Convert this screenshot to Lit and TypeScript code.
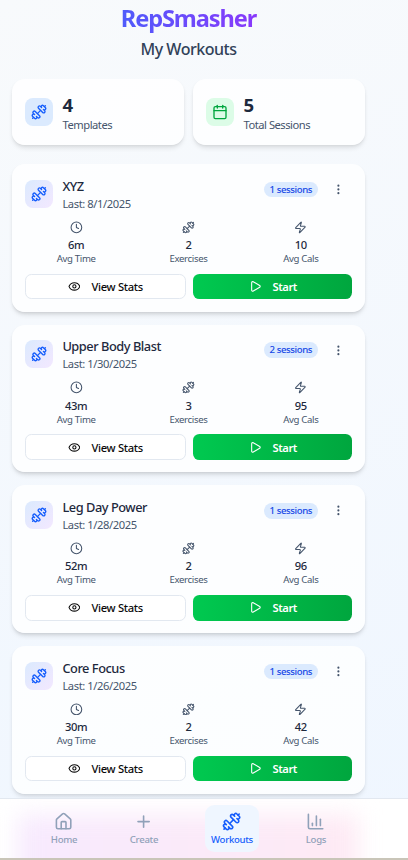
import { LitElement, html, css, svg } from "lit";
import { customElement, property } from "lit/decorators.js";

const ICONS: Record<string, any> = {
  dumbbell: svg`<path d="M17.596 12.768a2 2 0 1 0 2.829-2.829l-1.768-1.767a2 2 0 0 0 2.828-2.829l-2.828-2.828a2 2 0 0 0-2.829 2.828l-1.767-1.768a2 2 0 1 0-2.829 2.829z"/><path d="m2.5 21.5 1.4-1.4"/><path d="m20.1 3.9 1.4-1.4"/><path d="M5.343 21.485a2 2 0 1 0 2.829-2.828l1.767 1.768a2 2 0 1 0 2.829-2.829l-6.364-6.364a2 2 0 1 0-2.829 2.829l1.768 1.767a2 2 0 0 0-2.828 2.829z"/><path d="m9.6 14.4 4.8-4.8"/>`,
  calendar: svg`<path d="M8 2v4"/><path d="M16 2v4"/><rect width="18" height="18" x="3" y="4" rx="2"/><path d="M3 10h18"/>`,
  clock: svg`<circle cx="12" cy="12" r="10"/><path d="M12 6v6l4 2"/>`,
  zap: svg`<path d="M4 14a1 1 0 0 1-.78-1.63l9.9-10.2a.5.5 0 0 1 .86.46l-1.92 6.02A1 1 0 0 0 13 10h7a1 1 0 0 1 .78 1.63l-9.9 10.2a.5.5 0 0 1-.86-.46l1.92-6.02A1 1 0 0 0 11 14z"/>`,
  more: svg`<circle cx="12" cy="12" r="1"/><circle cx="12" cy="5" r="1"/><circle cx="12" cy="19" r="1"/>`,
  eye: svg`<path d="M2.062 12.348a1 1 0 0 1 0-.696 10.75 10.75 0 0 1 19.876 0 1 1 0 0 1 0 .696 10.75 10.75 0 0 1-19.876 0"/><circle cx="12" cy="12" r="3"/>`,
  play: svg`<path d="M5 5a2 2 0 0 1 3.008-1.728l11.997 6.998a2 2 0 0 1 .003 3.458l-12 7A2 2 0 0 1 5 19z"/>`,
  home: svg`<path d="M15 21v-8a1 1 0 0 0-1-1h-4a1 1 0 0 0-1 1v8"/><path d="M3 10a2 2 0 0 1 .709-1.528l7-5.999a2 2 0 0 1 2.582 0l7 5.999A2 2 0 0 1 21 10v9a2 2 0 0 1-2 2H5a2 2 0 0 1-2-2z"/>`,
  plus: svg`<path d="M5 12h14"/><path d="M12 5v14"/>`,
  chart: svg`<path d="M3 3v16a2 2 0 0 0 2 2h16"/><path d="M18 17V9"/><path d="M13 17V5"/><path d="M8 17v-3"/>`,
};

const icon = (name: string, size: number, weight = 2) => html`<svg
  width=${size} height=${size} viewBox="0 0 24 24" fill="none" stroke="currentColor"
  stroke-width=${weight} stroke-linecap="round" stroke-linejoin="round">${ICONS[name]}</svg>`;

interface Workout { name: string; last: string; sessions: number; time: string; exercises: number; cals: number }

const WORKOUTS: Workout[] = [
  { name: "XYZ", last: "8/1/2025", sessions: 1, time: "6m", exercises: 2, cals: 10 },
  { name: "Upper Body Blast", last: "1/30/2025", sessions: 2, time: "43m", exercises: 3, cals: 95 },
  { name: "Leg Day Power", last: "1/28/2025", sessions: 1, time: "52m", exercises: 2, cals: 96 },
  { name: "Core Focus", last: "1/26/2025", sessions: 1, time: "30m", exercises: 2, cals: 42 },
];

@customElement("workout-card")
class WorkoutCard extends LitElement {
  @property({ attribute: false }) workout!: Workout;

  static styles = css`
    :host { display: block; box-sizing: border-box; height: 147.8px; padding: 12.8px; border-radius: 12.8px;
      background: rgba(255, 255, 255, .8); box-shadow: 0 3.2px 5px -1px rgba(0,0,0,.1), 0 1.6px 3.2px -1.6px rgba(0,0,0,.1); }
    svg { display: block; flex: none; }
    .head { display: flex; align-items: flex-start; height: 38.4px; }
    .tile { width: 28px; height: 28px; margin-top: 3px; border-radius: 8px; display: grid; place-items: center;
      color: #155dfc; background: linear-gradient(135deg, #dbeafe, #f3e8ff); }
    .title { flex: 1; margin-left: 9.6px; }
    .name { font-size: 12.8px; line-height: 19px; font-weight: 550; color: #1d293d; letter-spacing: -.46px; }
    .last { font-size: 11.2px; line-height: 16px; color: #45556c; letter-spacing: -.42px; }
    .badge { margin-top: 5px; height: 15.6px; padding: 0 6.2px 0 5.6px; border-radius: 8px; background: #dbeafe; color: #1447e6;
      font-size: 9.6px; line-height: 15.6px; font-weight: 500; letter-spacing: -.42px; }
    .more { width: 25.6px; height: 25.6px; margin: 0 1px 0 7.4px; display: grid; place-items: center; color: #45556c; }
    .stats { display: grid; grid-template-columns: repeat(3, 1fr); gap: 9.6px; text-align: center; margin-top: 5.6px; }
    .stat { display: flex; flex-direction: column; align-items: center; color: #45556c; }
    .value { font-size: 11.2px; line-height: 16px; margin-top: 3.4px; font-weight: 500; color: #1d293d; letter-spacing: -.35px; }
    .label { font-size: 9.6px; line-height: 12.8px; letter-spacing: -.32px; }
    .actions { display: grid; grid-template-columns: 161px 159px; gap: 7px; margin-top: 8px; }
    .btn { box-sizing: border-box; height: 25.6px; display: flex; align-items: center; justify-content: center; gap: 11px;
      border-radius: 6.4px; font-size: 11.2px; font-weight: 500; letter-spacing: -.3px; }
    .view { background: #fff; border: 1px solid #e2e8f0; color: #0a0a0a; }
    .start { background: linear-gradient(90deg, #00c950, #00a63e); color: #fff; font-weight: 600; letter-spacing: -.45px; padding-left: 1px; }
  `;

  render() {
    const w = this.workout;
    const stat = (i: string, value: string | number, label: string) => html`
      <div class="stat">${icon(i, 12.8)}<div class="value">${value}</div><div class="label">${label}</div></div>`;
    return html`
      <div class="head">
        <div class="tile">${icon("dumbbell", 16)}</div>
        <div class="title"><div class="name">${w.name}</div><div class="last">Last: ${w.last}</div></div>
        <div class="badge">${w.sessions} sessions</div>
        <div class="more">${icon("more", 12.8)}</div>
      </div>
      <div class="stats">
        ${stat("clock", w.time, "Avg Time")}${stat("dumbbell", w.exercises, "Exercises")}${stat("zap", w.cals, "Avg Cals")}
      </div>
      <div class="actions">
        <div class="btn view">${icon("eye", 12.8)}<span>View Stats</span></div>
        <div class="btn start">${icon("play", 12.8)}<span>Start</span></div>
      </div>`;
  }
}

@customElement("app-root")
class AppRoot extends LitElement {
  static styles = css`
    :host { display: block; position: relative; height: 860px; overflow: hidden;
      font-family: "Noto Sans", "Open Sans", sans-serif;
      background: linear-gradient(160deg, #f8fafc, #eff6ff); }
    svg { display: block; }
    .page { width: 353px; margin-left: 12px; }
    .brand { padding: 2px 0 1px 2px; text-align: center; font-size: 23.6px; line-height: 32px; font-weight: 700; letter-spacing: -1.1px; }
    .brand span { background: linear-gradient(90deg, #4f5bfb, #8a38fb); -webkit-background-clip: text; background-clip: text; color: transparent; padding-right: 2px; }
    h1 { margin: 2px 0 0; text-align: center; font-size: 16px; line-height: 24px; font-weight: 500; color: #314158; letter-spacing: -.48px; }
    .totals { display: grid; grid-template-columns: 1fr 1fr; gap: 9px; margin-top: 18px; }
    .total { height: 66px; box-sizing: border-box; padding: 0 13px; display: flex; align-items: center; gap: 9.6px; border-radius: 12.8px;
      background: rgba(255,255,255,.8); box-shadow: 0 3.2px 5px -1px rgba(0,0,0,.1), 0 1.6px 3.2px -1.6px rgba(0,0,0,.1); }
    .tile { width: 28px; height: 28px; border-radius: 8px; display: grid; place-items: center; }
    .blue { background: #dbeafe; color: #155dfc; }
    .green { background: #dcfce7; color: #00a63e; }
    .num { font-size: 18.6px; line-height: 25px; font-weight: 700; color: #1d293d; }
    .cap { font-size: 11.2px; line-height: 15px; color: #45556c; letter-spacing: -.5px; }
    .list { display: grid; gap: 12.8px; margin-top: 19px; }
    nav { position: absolute; left: 0; right: 0; bottom: 0; height: 62px; box-sizing: border-box; overflow: hidden;
      border-top: 1px solid #e2e8f0; border-bottom: 2px solid #c9c5b8; background: #fff; }
    .glow { position: absolute; left: 18px; width: 340px; top: 16px; height: 90px; filter: blur(11px);
      background: linear-gradient(90deg, #f7eafe, #feeaf4); }
    .tabs { position: relative; display: flex; align-items: flex-start; padding: 6px 0 0 38px; }
    .tab { box-sizing: border-box; width: 52px; height: 47px; padding-top: 6.6px; border-radius: 9.6px; display: flex; flex-direction: column; align-items: center;
      color: #90a1b9; font-size: 9.6px; line-height: 13px; font-weight: 550; gap: 2.4px; letter-spacing: -.3px; }
    .tab:nth-child(2) { margin-left: 28px; }
    .tab:nth-child(3) { margin-left: 35px; width: 54px; background: #eff6ff; color: #155dfc; }
    .tab:nth-child(4) { margin-left: 31px; }
  `;

  render() {
    return html`
      <div class="page">
        <div class="brand"><span>RepSmasher</span></div>
        <h1>My Workouts</h1>
        <div class="totals">
          <div class="total"><div class="tile blue">${icon("dumbbell", 16)}</div><div><div class="num">4</div><div class="cap">Templates</div></div></div>
          <div class="total"><div class="tile green">${icon("calendar", 16)}</div><div><div class="num">5</div><div class="cap">Total Sessions</div></div></div>
        </div>
        <div class="list">${WORKOUTS.map((w) => html`<workout-card .workout=${w}></workout-card>`)}</div>
      </div>
      <nav>
        <div class="glow"></div>
        <div class="tabs">
          <div class="tab">${icon("home", 19.2)}<span>Home</span></div>
          <div class="tab">${icon("plus", 19.2)}<span>Create</span></div>
          <div class="tab">${icon("dumbbell", 19.2)}<span>Workouts</span></div>
          <div class="tab">${icon("chart", 19.2)}<span>Logs</span></div>
        </div>
      </nav>`;
  }
}
